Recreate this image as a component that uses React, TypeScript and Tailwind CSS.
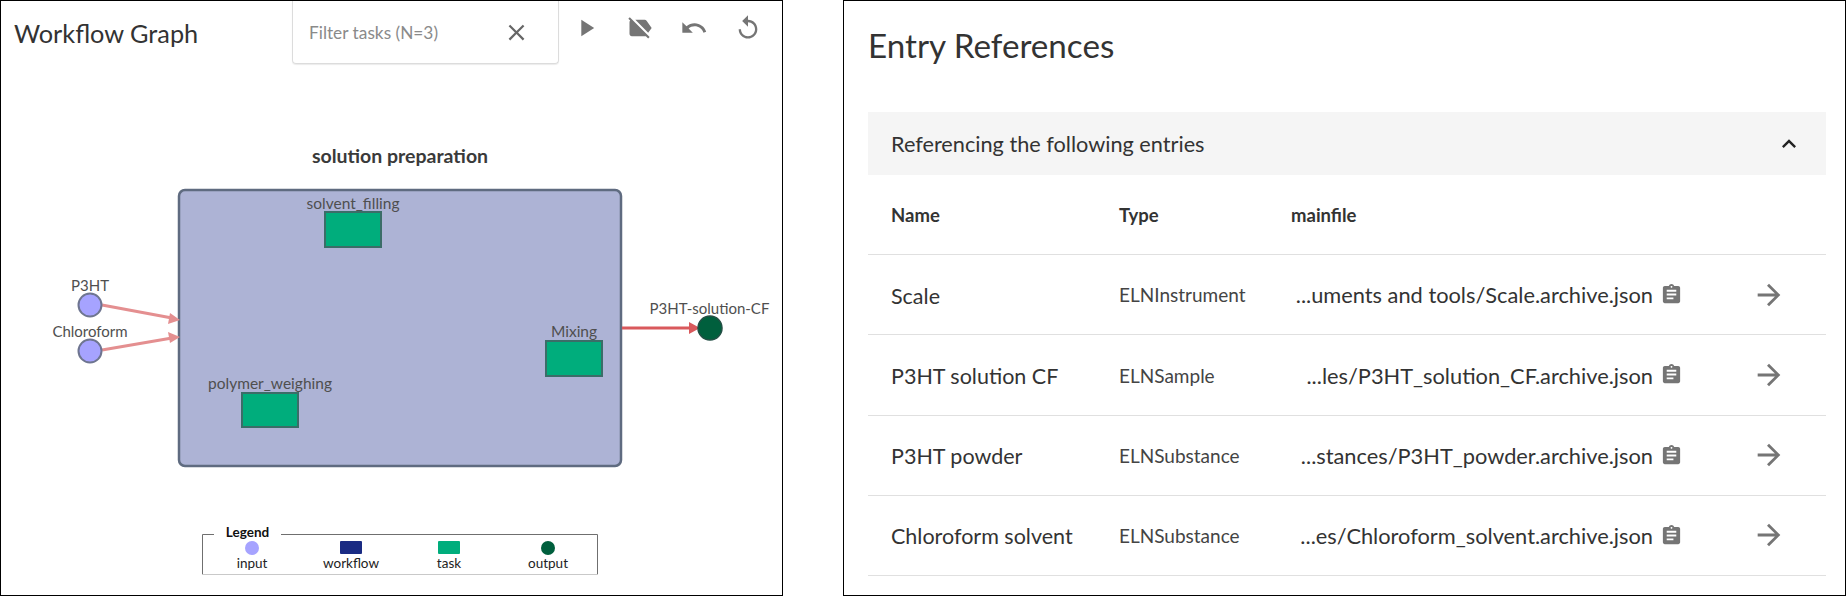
import { MdPlayArrow, MdLabelOff, MdUndo, MdReplay, MdClose, MdAssignment, MdArrowForward, MdExpandLess } from 'react-icons/md'

const TOOLS = [MdPlayArrow, MdLabelOff, MdUndo, MdReplay]

const ENTRIES = [
  { name: 'Scale', type: 'ELNInstrument', file: '...uments and tools/Scale.archive.json' },
  { name: 'P3HT solution CF', type: 'ELNSample', file: '...les/P3HT_solution_CF.archive.json' },
  { name: 'P3HT powder', type: 'ELNSubstance', file: '...stances/P3HT_powder.archive.json' },
  { name: 'Chloroform solvent', type: 'ELNSubstance', file: '...es/Chloroform_solvent.archive.json' },
]

function Graph() {
  // viewBox uses the same numbers as the page, the svg starts below the header
  return (
    <svg className="block" width="781" height="530" viewBox="1 65 781 530" fontFamily="Lato, sans-serif">
      <text x="400" y="163" textAnchor="middle" fontSize="19.5" fontWeight="700" fill="#3a3a3a">solution preparation</text>
      <rect x="179" y="190" width="442" height="276" rx="6" fill="#adb3d5" stroke="#5f6b80" strokeWidth="2.5" />

      <g fill="#00ad7c" stroke="#3b6d68" strokeWidth="2">
        <rect x="325" y="212" width="56" height="35" />
        <rect x="546" y="341" width="56" height="35" />
        <rect x="242" y="393" width="56" height="34" />
      </g>

      <g fontSize="15.5" fill="#4f4f4f" textAnchor="middle">
        <text x="353" y="209">solvent_filling</text>
        <text x="574" y="337">Mixing</text>
        <text x="270" y="389">polymer_weighing</text>
      </g>
      <g fontSize="15" fill="#4f4f4f" textAnchor="middle">
        <text x="90" y="291">P3HT</text>
        <text x="90" y="337">Chloroform</text>
        <text x="709.5" y="314">P3HT-solution-CF</text>
      </g>

      <g stroke="#e48f90" strokeWidth="3">
        <line x1="102" y1="305" x2="172" y2="318" />
        <line x1="102" y1="350" x2="172" y2="338" />
      </g>
      <polygon points="180,320 170,313 168,324" fill="#e48f90" />
      <polygon points="180,337 168,332 170,343" fill="#e48f90" />
      <line x1="622" y1="328" x2="692" y2="328" stroke="#d9595c" strokeWidth="3" />
      <polygon points="700,328 689,322 689,334" fill="#d9595c" />

      <g fill="#a6a3ff" stroke="#6e7590" strokeWidth="2">
        <circle cx="90" cy="305" r="11.5" />
        <circle cx="90" cy="351" r="11.5" />
      </g>
      <circle cx="710" cy="328" r="12" fill="#005f3d" stroke="#234f45" strokeWidth="1.5" />

      {/* legend */}
      <path d="M214 534.5H202.5V574M281 534.5H597.5V574" fill="none" stroke="#6f6f6f" strokeWidth="1" />
      <line x1="202" y1="574.5" x2="598" y2="574.5" stroke="#c9c9c9" />
      <text x="247.5" y="537" textAnchor="middle" fontSize="13.5" fontWeight="700" fill="#111">Legend</text>
      <circle cx="252" cy="548" r="7" fill="#a6a3ff" />
      <rect x="340" y="541" width="22" height="13" rx="1" fill="#1a2b83" />
      <rect x="438" y="541" width="22" height="13" rx="1" fill="#00ad7c" />
      <circle cx="548" cy="548" r="7" fill="#005f3d" />
      <g fontSize="13.5" fill="#222" textAnchor="middle">
        <text x="252" y="568">input</text>
        <text x="351" y="568">workflow</text>
        <text x="449" y="568">task</text>
        <text x="548" y="568">output</text>
      </g>
    </svg>
  )
}

export default function App() {
  return (
    <div className="flex h-[596px] w-[1847px] overflow-hidden bg-white font-['Lato',sans-serif] text-[#333]">
      {/* Workflow graph card */}
      <div className="h-[596px] w-[783px] shrink-0 border border-black">
        <div className="flex h-[64px] items-start">
          <h2 className="w-[291px] pl-[13px] pt-[17px] text-[25.3px] leading-[30px] text-[#333]">Workflow Graph</h2>
          <div className="flex h-[63px] w-[267px] items-center rounded-b border border-t-0 border-[#dcdcdc] pl-[16px] pr-[28px] shadow-[0_1px_1px_rgba(0,0,0,0.08)]">
            <input
              readOnly
              placeholder="Filter tasks (N=3)"
              className="min-w-0 flex-1 bg-transparent pt-[2px] text-[17.3px] outline-none placeholder:text-[#8a8a8a]"
            />
            <MdClose size={27} className="text-[#666]" />
          </div>
          <div className="flex">
            {TOOLS.map((Icon, i) => (
              <div key={i} className="flex h-[53px] w-[54px] items-center justify-center text-[#757575]">
                <Icon size={28} />
              </div>
            ))}
          </div>
        </div>
        <Graph />
      </div>

      {/* Entry references card */}
      <div className="ml-[60px] h-[596px] w-[1003px] shrink-0 border border-black pl-[24px] pr-[19px]">
        <h2 className="pt-[26px] text-[33.2px] leading-[36px] text-[#333]">Entry References</h2>
        <div className="mt-[49px] flex h-[63px] items-center justify-between bg-[#f5f5f5] pl-[23px] pr-[23px]">
          <span className="pt-[2px] text-[21.7px]">Referencing the following entries</span>
          <MdExpandLess size={28} className="text-[#222]" />
        </div>
        <div className="flex h-[80px] items-center border-b border-[#e0e0e0] pl-[23px] pt-[2px] text-[18.5px] font-bold">
          <div className="w-[228px]">Name</div>
          <div className="w-[172px]">Type</div>
          <div>mainfile</div>
        </div>
        {ENTRIES.map((e) => (
          <div key={e.name} className="flex h-[80.25px] items-center border-b border-[#e0e0e0] pl-[23px] pr-[40px]">
            <div className="w-[228px] pt-[2px] text-[21.5px]">{e.name}</div>
            <div className="w-[172px] pt-[2px] text-[19px] text-[#444]">{e.type}</div>
            <div className="w-[362px] pt-[2px] text-right text-[21.8px]">{e.file}</div>
            <MdAssignment size={23} className="ml-[7px] text-[#757575]" />
            <MdArrowForward size={34} className="ml-auto text-[#757575]" />
          </div>
        ))}
      </div>
    </div>
  )
}
